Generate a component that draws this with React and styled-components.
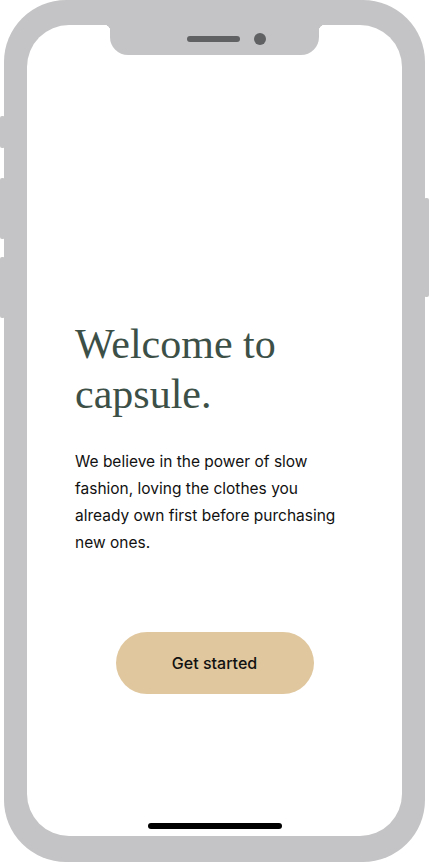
import React from 'react';
import styled, { createGlobalStyle } from 'styled-components';

const GlobalStyle = createGlobalStyle`
  html, body {
    margin: 0;
    padding: 0;
    background: #ffffff;
  }
  * {
    box-sizing: border-box;
  }
`;

const Page = styled.div`
  width: 429px;
  height: 862px;
  padding: 0 4px;
`;

const PhoneBody = styled.div`
  position: relative;
  width: 421px;
  height: 862px;
  background: #c4c4c6;
  border-radius: 62px;
  padding: 25px 23px 26px 23px;
`;

const SideButton = styled.span`
  position: absolute;
  top: ${(p) => p.top}px;
  height: ${(p) => p.size}px;
  width: 5px;
  background: #c4c4c6;
  border-radius: 2px;
  ${(p) => (p.right ? 'right: -4px;' : 'left: -4px;')}
`;

const Screen = styled.div`
  position: relative;
  height: 100%;
  background: #ffffff;
  border-radius: 42px;
  display: flex;
  flex-direction: column;
  align-items: center;
  padding: 294px 48px 7px 48px;
`;

const Notch = styled.div`
  position: absolute;
  top: 0;
  left: 83px;
  width: 209px;
  height: 30px;
  background: #c4c4c6;
  border-radius: 0 0 18px 18px;
  display: flex;
  align-items: center;
  justify-content: center;
  gap: 14px;
  padding-bottom: 2px;

  &::before,
  &::after {
    content: '';
    position: absolute;
    top: 0;
    width: 6px;
    height: 6px;
  }
  &::before {
    left: -6px;
    background: radial-gradient(circle at 0 100%, transparent 6px, #c4c4c6 6.5px);
  }
  &::after {
    right: -6px;
    background: radial-gradient(circle at 100% 100%, transparent 6px, #c4c4c6 6.5px);
  }
`;

const Speaker = styled.span`
  width: 53px;
  height: 6px;
  border-radius: 3px;
  background: #5f6163;
  margin-left: 24px;
`;

const Camera = styled.span`
  width: 12px;
  height: 12px;
  border-radius: 50%;
  background: #5f6163;
`;

const Content = styled.div`
  width: 100%;
  display: flex;
  flex-direction: column;
`;

const Title = styled.h1`
  margin: 0;
  font-family: "Liberation Serif", "Times New Roman", serif;
  font-weight: 400;
  font-size: 42px;
  line-height: 50px;
  color: #3d5047;
`;

const Intro = styled.p`
  margin: 29px 0 0 0;
  max-width: 266px;
  font-family: Inter, "Noto Sans", sans-serif;
  font-size: 15.5px;
  line-height: 27px;
  color: #111111;
`;

const StartButton = styled.button`
  margin-top: 76px;
  width: 198px;
  height: 62px;
  border: none;
  border-radius: 31px;
  background: #e0c79e;
  font-family: Inter, "Noto Sans", sans-serif;
  font-size: 16px;
  font-weight: 500;
  color: #111111;
  cursor: pointer;
`;

const HomeIndicator = styled.span`
  margin-top: auto;
  width: 134px;
  height: 6px;
  border-radius: 3px;
  background: #000000;
`;

export default function App() {
  return (
    <Page>
      <GlobalStyle />
      <PhoneBody>
        <SideButton top={116} size={32} />
        <SideButton top={178} size={61} />
        <SideButton top={257} size={61} />
        <SideButton right top={198} size={99} />
        <Screen>
          <Notch>
            <Speaker />
            <Camera />
          </Notch>
          <Content>
            <Title>
              Welcome to
              <br />
              capsule.
            </Title>
            <Intro>
              We believe in the power of slow fashion, loving the clothes you
              already own first before purchasing new ones.
            </Intro>
          </Content>
          <StartButton>Get started</StartButton>
          <HomeIndicator />
        </Screen>
      </PhoneBody>
    </Page>
  );
}
